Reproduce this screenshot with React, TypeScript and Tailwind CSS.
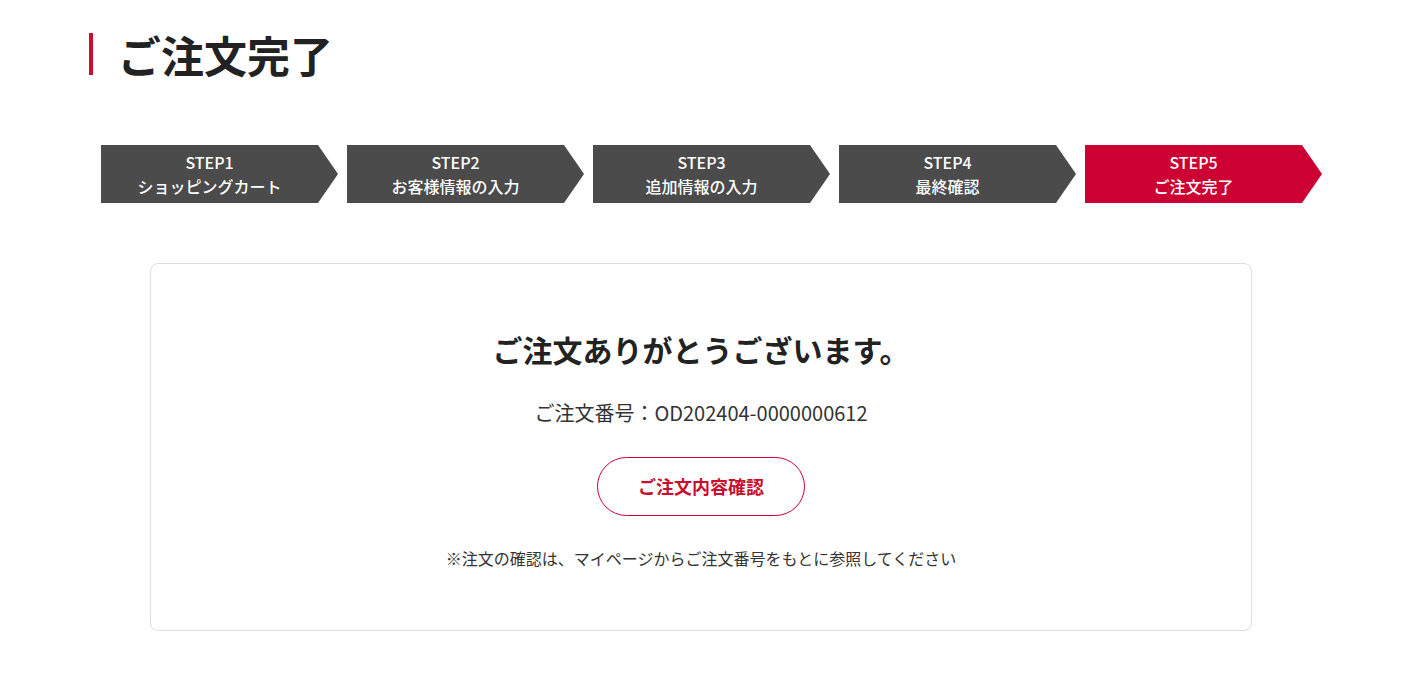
import React from "react";

const steps = [
  { n: "STEP1", label: "ショッピングカート" },
  { n: "STEP2", label: "お客様情報の入力" },
  { n: "STEP3", label: "追加情報の入力" },
  { n: "STEP4", label: "最終確認" },
  { n: "STEP5", label: "ご注文完了", active: true },
];

export default function App() {
  return (
    <div
      className="min-h-[676px] bg-white text-[#222]"
      style={{ fontFamily: '"Noto Sans CJK JP", "Noto Sans", sans-serif' }}
    >
      <div className="pl-[89px] pt-[33px]">
        <h1 className="border-l-[4px] border-[#c8102e] pl-[25px] text-[43px] font-bold leading-[42px] text-[#222]">
          ご注文完了
        </h1>
      </div>

      <div className="mt-[70px] flex gap-[9px] pl-[101px]">
        {steps.map((s) => (
          <div
            key={s.n}
            className={`flex h-[58px] w-[237px] flex-col items-center justify-center pr-[20px] text-[16px] font-medium leading-[24px] text-white [clip-path:polygon(0_0,calc(100%-20px)_0,100%_50%,calc(100%-20px)_100%,0_100%)] ${
              s.active ? "bg-[#cc0033]" : "bg-[#4b4b4b]"
            }`}
          >
            <span>{s.n}</span>
            <span>{s.label}</span>
          </div>
        ))}
      </div>

      <div className="ml-[150px] mt-[60px] flex h-[368px] w-[1102px] flex-col items-center rounded-[8px] border border-[#dddddd] pt-[64px]">
        <p className="text-[30px] font-bold leading-[42px] text-[#222]">
          ご注文ありがとうございます。
        </p>
        <p className="mt-[29px] text-[20px] leading-[28px] text-[#333]">
          ご注文番号：OD202404-0000000612
        </p>
        <button className="mt-[30px] flex h-[59px] w-[208px] items-center justify-center rounded-full border border-[#cc0033] bg-white text-[18px] font-bold text-[#c8102e]">
          ご注文内容確認
        </button>
        <p className="mt-[31px] text-[16px] leading-[22px] text-[#333]">
          ※注文の確認は、マイページからご注文番号をもとに参照してください
        </p>
      </div>
    </div>
  );
}
